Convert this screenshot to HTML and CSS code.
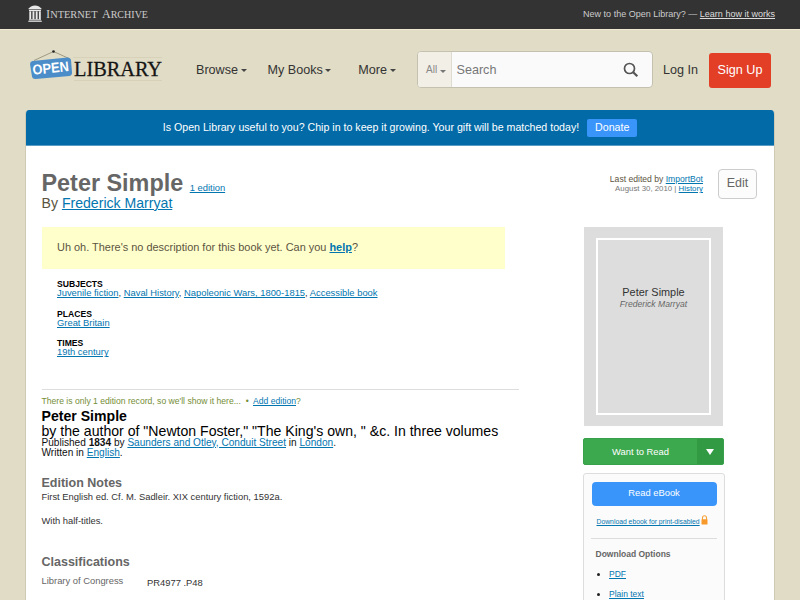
FILE: index.html
```
<!DOCTYPE html>
<html lang="en">
<head>
<meta charset="UTF-8">
<meta name="viewport" content="width=device-width, initial-scale=1.0">
<title>Peter Simple | Open Library</title>
<link rel="stylesheet" href="styles.css">
</head>
<body>

<div id="topNotice">
    <svg class="ia-logo" width="124" height="20" viewBox="0 0 124 20">
        <g fill="#e8e8e8">
            <path d="M0.500 3.500 L3 1.500 Q7 -0.500 11 1.500 L13.500 3.500 V4.300 H0.500z" />
            <rect x="1" y="4.800" width="12" height="1.300" />
            <rect x="1.300" y="6.300" width="1.900" height="8" />
            <rect x="4.500" y="6.300" width="1.900" height="8" />
            <rect x="7.700" y="6.300" width="1.900" height="8" />
            <rect x="10.900" y="6.300" width="1.900" height="8" />
            <rect x="1" y="14.300" width="12" height="1" />
            <rect x="0.300" y="15.700" width="13.500" height="1.100" />
        </g>
        <g class="ia-name">
            <text x="18" y="13" textLength="51.500" lengthAdjust="spacingAndGlyphs"><tspan class="big">I</tspan>NTERNET</text>
            <text x="74" y="13" textLength="46" lengthAdjust="spacingAndGlyphs"><tspan class="big">A</tspan>RCHIVE</text>
        </g>
    </svg>
    <div class="new-user">New to the Open Library? — <a href="#">Learn how it works</a></div>
</div>

<header class="header-bar">
    <svg class="logo" width="136" height="40" viewBox="0 0 136 40">
        <path d="M5 10.500 L24.500 1.500 L40 8.500" fill="none" stroke="#8d8870" stroke-width="0.800" />
        <circle cx="24.500" cy="1.500" r="1.300" fill="#222" />
        <path d="M3.500 11 L38.500 7.500 Q41.500 7.500 42 10 L43 22.500 Q43 25.500 40.500 26 L6.500 29 Q3.500 29 3 26.500 L1 14 Q1 11.500 3.500 11z" fill="#4b8dc9" />
        <path d="M44 7.500 H133 M45 30.500 H133" stroke="#cfc9ae" stroke-width="0.600" />
        <text class="logo-open" x="4" y="24.800" transform="rotate(-6 4 24.800)" textLength="36.500" lengthAdjust="spacingAndGlyphs">OPEN</text>
        <text class="logo-library" x="45" y="26" textLength="88" lengthAdjust="spacingAndGlyphs">LIBRARY</text>
    </svg>
    <nav class="menu">
        <a class="browse" href="#">Browse <i class="arrow"></i></a>
        <a class="my-books" href="#">My Books <i class="arrow"></i></a>
        <a class="more" href="#">More <i class="arrow"></i></a>
    </nav>
    <div class="search">
        <div class="facet">All <i class="arrow"></i></div>
        <div class="search-input">Search</div>
        <svg class="search-icon" width="16" height="16" viewBox="0 0 16 16" fill="none" stroke="#555">
            <circle cx="6.500" cy="6.500" r="5" stroke-width="1.700" />
            <path d="M10.200 10.200 L14.300 14.300" stroke-width="2.200" />
        </svg>
    </div>
    <a class="login" href="#">Log In</a>
    <a class="signup" href="#">Sign Up</a>
</header>

<main id="contentContainer">
    <div class="donate-banner">
        <span>Is Open Library useful to you? Chip in to keep it growing. Your gift will be matched today!</span>
        <a class="donate" href="#">Donate</a>
    </div>

    <div class="content-head">
        <div class="work-title">
            <h1>Peter Simple <a href="#">1 edition</a></h1>
            <h2>By <a href="#">Frederick Marryat</a></h2>
        </div>
        <div class="last-edit">
            <div class="editor">Last edited by <a href="#">ImportBot</a></div>
            <div class="date">August 30, 2010 | <a href="#">History</a></div>
        </div>
        <a class="edit-btn" href="#">Edit</a>
    </div>

    <div class="content-body">
        <div class="content-left">
            <div class="no-description">Uh oh. There's no description for this book yet. Can you <a href="#">help</a>?</div>
            <div class="subjects">
                <h6>SUBJECTS</h6>
                <p><a href="#">Juvenile fiction</a>, <a href="#">Naval History</a>, <a href="#">Napoleonic Wars, 1800-1815</a>, <a href="#">Accessible book</a></p>
                <h6>PLACES</h6>
                <p><a href="#">Great Britain</a></p>
                <h6>TIMES</h6>
                <p><a href="#">19th century</a></p>
            </div>
            <div class="edition">
                <p class="one-edition">There is only 1 edition record, so we'll show it here... &nbsp;•&nbsp; <a href="#">Add edition</a>?</p>
                <h3>Peter Simple</h3>
                <h4>by the author of "Newton Foster," "The King's own, " &amp;c. In three volumes</h4>
                <p class="published">Published <b>1834</b> by <a href="#">Saunders and Otley, Conduit Street</a> in <a href="#">London</a>.</p>
                <p class="published">Written in <a href="#">English</a>.</p>
            </div>
            <div class="notes">
                <h5>Edition Notes</h5>
                <p>First English ed. Cf. M. Sadleir. XIX century fiction, 1592a.</p>
                <p>With half-titles.</p>
            </div>
            <div class="classifications">
                <h5>Classifications</h5>
                <dl>
                    <dt>Library of Congress</dt>
                    <dd>PR4977 .P48</dd>
                </dl>
            </div>
        </div>

        <aside class="content-right">
            <div class="cover">
                <div class="cover-frame">
                    <div class="cover-title">Peter Simple</div>
                    <div class="cover-author">Frederick Marryat</div>
                </div>
            </div>
            <div class="want-to-read">
                <span class="want-label">Want to Read</span>
                <span class="want-drop"><i></i></span>
            </div>
            <div class="read-options">
                <a class="read-btn" href="#">Read eBook</a>
                <div class="daisy">
                    <a href="#">Download ebook for print-disabled</a>
                    <svg width="7" height="10" viewBox="0 0 7 10">
                        <path d="M1.500 5 V2.800 a2 2 0 0 1 4 0 V5" fill="none" stroke="#f7a23b" stroke-width="1.100" />
                        <rect x="0.500" y="4.200" width="6" height="5.300" rx="0.500" fill="#f89a2b" />
                    </svg>
                </div>
                <h6>Download Options</h6>
                <ul>
                    <li><a href="#">PDF</a></li>
                    <li><a href="#">Plain text</a></li>
                </ul>
            </div>
        </aside>
    </div>
</main>

</body>
</html>
```
FILE: styles.css
```
* {
    box-sizing: border-box;
}
body {
    margin: 0;
    height: 600px;
    overflow: hidden;
    background-color: #e1dcc5;
    color: #333;
    font-family: "Liberation Sans", Arial, Helvetica, sans-serif;
    font-size: 9.4px;
}
h1, h2, h3, h4, h5, h6, p, ul, dl, dd {
    margin: 0;
    padding: 0;
}
a {
    color: #0376b0;
}

/* top bar */
#topNotice {
    display: flex;
    justify-content: space-between;
    height: 30px;
    padding: 5px 25px 0 28px;
    background-color: #333;
    border-bottom: 1px solid #efe9d2;
}
.ia-name {
    fill: #ccc;
    font-family: "Liberation Serif", serif;
    font-size: 10px;
}
.ia-name .big {
    font-size: 12px;
}
.new-user {
    color: #ccc;
    font-size: 9.03px;
    line-height: 19px;
}
.new-user a {
    color: #ddd;
}

/* header */
.header-bar {
    display: flex;
    height: 80px;
    padding: 20px 0 0 29px;
    font-size: 12.6px;
    line-height: 40px;
}
.header-bar a {
    color: #333;
    text-decoration: none;
}
.logo {
    overflow: visible;
}
.logo-open {
    fill: #fff;
    font-size: 14px;
    font-weight: bold;
}
.logo-library {
    fill: #151515;
    stroke: #151515;
    stroke-width: 0.3;
    font-family: "Liberation Serif", serif;
    font-size: 22px;
}
.menu {
    display: flex;
    width: 252px;
    padding-left: 31px;
}
.menu .my-books {
    margin-left: 21px;
}
.menu .more {
    margin-left: 27px;
}
.arrow {
    display: inline-block;
    margin-left: -1px;
    border: 3px solid transparent;
    border-top-color: #444;
    border-bottom: 0;
    vertical-align: 2px;
}
.search {
    display: flex;
    width: 236px;
    height: 37px;
    margin-top: 1px;
    border: 1px solid #c5c1b0;
    border-radius: 4px;
    background-color: #fafafa;
    overflow: hidden;
}
.facet {
    width: 34px;
    padding-left: 8px;
    border-right: 1px solid #dedbd0;
    background-color: #f2efe7;
    color: #888;
    font-size: 10px;
    line-height: 35px;
}
.facet .arrow {
    margin-left: 0;
    border-top-color: #777;
    vertical-align: 0;
}
.search-input {
    flex: 1;
    padding-left: 4.5px;
    color: #777;
    line-height: 37px;
}
.search-icon {
    margin: 10px 13px 0 0;
}
.header-bar .login {
    margin-left: 10px;
}
.header-bar .signup {
    width: 62px;
    height: 35px;
    margin: 3px 0 0 11px;
    border-radius: 3px;
    background-color: #e33f27;
    color: #fff;
    line-height: 34px;
    text-align: center;
}

/* page */
#contentContainer {
    width: 750px;
    height: 500px;
    margin-left: 25px;
    border: 1px solid #cfcab4;
    border-top: 0;
    border-radius: 4px 4px 0 0;
    background-color: #fff;
    overflow: hidden;
}
.donate-banner {
    display: flex;
    justify-content: center;
    height: 36px;
    border-bottom: 1px solid #5a9cc4;
    background-color: #026aa7;
    color: #fff;
    font-size: 10.63px;
    line-height: 35px;
}
.donate-banner .donate {
    width: 50px;
    height: 18px;
    margin: 9px 0 0 8px;
    border-radius: 2px;
    background-color: #3a95fb;
    color: #fff;
    line-height: 17px;
    text-align: center;
    text-decoration: none;
}
.content-head {
    display: flex;
    height: 81px;
    padding: 23px 17px 0 15.5px;
}
.work-title {
    flex: 1;
    padding-top: 6px;
}
h1 {
    color: #666;
    font-size: 23.4px;
    line-height: 16px;
}
h1 a {
    font-size: 9.4px;
    font-weight: normal;
}
h2 {
    color: #5b5441;
    font-size: 14.1px;
    font-weight: normal;
    line-height: 14px;
}
.last-edit {
    padding-top: 6px;
    text-align: right;
}
.last-edit .editor {
    color: #5b5441;
    font-size: 8.6px;
    line-height: 9px;
}
.last-edit .date {
    color: #777;
    font-size: 7.85px;
    line-height: 9px;
}
.edit-btn {
    width: 39px;
    height: 30px;
    margin-left: 15px;
    border: 1px solid #ccc;
    border-radius: 4px;
    background-color: #fcfcfc;
    color: #666;
    font-size: 12.5px;
    line-height: 27px;
    text-align: center;
    text-decoration: none;
}
.content-body {
    display: flex;
    padding-left: 15.5px;
}
.content-left {
    width: 477px;
    margin-right: 64.5px;
}
.no-description {
    width: 463.5px;
    height: 42px;
    padding-left: 15.5px;
    background-color: #ffffcc;
    color: #5b5441;
    font-size: 10.95px;
    line-height: 41px;
}
.no-description a {
    font-weight: bold;
}
.subjects {
    height: 120px;
    padding: 10px 0 0 15.5px;
}
.subjects h6 {
    height: 9px;
    color: #000;
    font-size: 8.6px;
    line-height: 10px;
}
.subjects p {
    margin-bottom: 11px;
    line-height: 9.7px;
}
.edition {
    padding-top: 6px;
    border-top: 1px solid #ddd;
    color: #111;
}
.one-edition {
    color: #748d36;
    font-size: 8.6px;
    line-height: 10px;
}
.edition h3 {
    margin-top: 3px;
    color: #000;
    font-size: 14.1px;
    line-height: 14.5px;
}
.edition h4 {
    color: #000;
    font-size: 14.1px;
    font-weight: normal;
    line-height: 14px;
}
.published {
    font-size: 10.1px;
    line-height: 10.4px;
}
h5 {
    color: #666;
    font-size: 12.5px;
    line-height: 15px;
}
.notes {
    margin-top: 18px;
}
.notes p {
    margin-bottom: 12px;
    line-height: 12px;
}
.classifications {
    margin-top: 28px;
}
.classifications dl {
    display: flex;
    padding-top: 5px;
}
.classifications dt {
    width: 105.5px;
    color: #666;
    line-height: 12px;
}
.classifications dd {
    padding-top: 2px;
    line-height: 12px;
}

/* sidebar */
.content-right {
    width: 142px;
}
.cover {
    width: 139px;
    height: 199px;
    margin-left: 1px;
    padding: 11px 12px;
    background-color: #ddd;
}
.cover-frame {
    height: 177px;
    padding-top: 45px;
    border: 2px solid #fff;
    text-align: center;
}
.cover-title {
    color: #333;
    font-size: 10.9px;
    line-height: 14px;
}
.cover-author {
    color: #666;
    font-size: 8.6px;
    font-style: italic;
    line-height: 11px;
}
.want-to-read {
    display: flex;
    width: 141px;
    height: 27px;
    margin-top: 12px;
    border: 1px solid #38a04a;
    border-radius: 2px;
    background-color: #3da94e;
    color: #fff;
    line-height: 26px;
}
.want-label {
    flex: 1;
    text-align: center;
}
.want-drop {
    display: flex;
    align-items: center;
    justify-content: center;
    width: 26px;
    background-color: #339a44;
}
.want-drop i {
    border: 4.5px solid transparent;
    border-top: 6px solid #fff;
    border-bottom: 0;
}
.read-options {
    height: 160px;
    margin-top: 8px;
    padding: 8px 7px 0;
    border: 1px solid #ddd;
    border-radius: 3px;
    background-color: #fbfbfb;
}
.read-btn {
    display: block;
    height: 24px;
    margin: 0 0.5px;
    border-radius: 4px;
    background-color: #3a95fb;
    color: #fff;
    line-height: 22px;
    text-align: center;
    text-decoration: none;
}
.daisy {
    display: flex;
    height: 33px;
    padding: 9px 0 0 5.5px;
    border-bottom: 1px solid #ddd;
    font-size: 6.8px;
    line-height: 13px;
    white-space: nowrap;
}
.daisy svg {
    margin-left: 1px;
}
.read-options h6 {
    margin: 8px 0 0 4.5px;
    color: #666;
    font-size: 8.5px;
    line-height: 14px;
}
.read-options ul {
    margin-top: 2.5px;
    padding-left: 18px;
    color: #222;
    font-size: 8.5px;
    line-height: 20.5px;
}
```
